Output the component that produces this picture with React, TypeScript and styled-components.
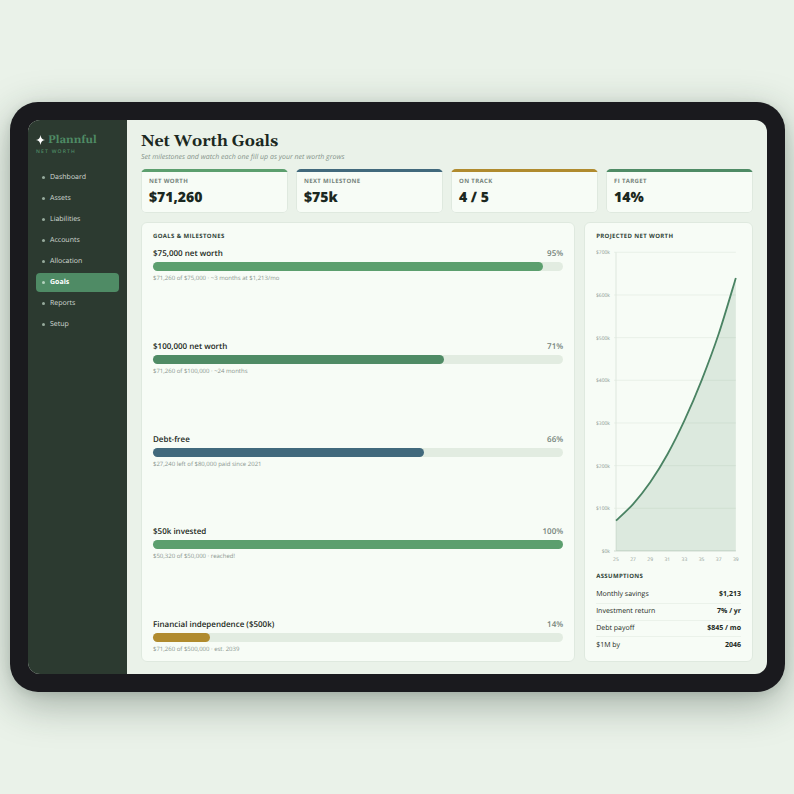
import React from "react";
import styled, { createGlobalStyle } from "styled-components";

const SANS = '"Open Sans", "Noto Sans", sans-serif';
const SERIF = 'Gelasio, Georgia, serif';

const GlobalStyle = createGlobalStyle`
  *, *::before, *::after { box-sizing: border-box; }
  body {
    margin: 0;
    background: #eaf2e9;
    color: #1b2821;
    font-family: ${SANS};
    text-rendering: geometricPrecision;
  }
  h1, h2, h3, p, ul, ol { margin: 0; padding: 0; }
  ul, ol { list-style: none; }
`;

const Stage = styled.div`
  min-height: 100vh;
  display: flex;
  align-items: center;
  justify-content: center;
  padding: 0 9px 0 10px;
  overflow: hidden;
`;

const Device = styled.div`
  width: 100%;
  padding: 18px;
  border-radius: 28px;
  background: #1a1a1e;
  box-shadow: 0 12px 40px rgba(30, 50, 38, 0.36), 0 2px 10px rgba(30, 50, 38, 0.1);
`;

const Screen = styled.div`
  display: flex;
  aspect-ratio: 4 / 3;
  border-radius: 12px;
  overflow: hidden;
  background: #eaf2e9;
`;

const Sidebar = styled.aside`
  flex: none;
  width: 99px;
  padding: 12px 8px;
  background: #2c3a30;
`;

const Brand = styled.div`
  display: flex;
  align-items: center;
  gap: 3px;
  color: #4f8b65;
  font: 700 11px/16px ${SERIF};
`;

const BrandStar = styled.svg`
  width: 9px;
  height: 10px;
  fill: #ffffff;
`;

const BrandSub = styled.p`
  color: #4f8b65;
  font-size: 5px;
  font-weight: 600;
  line-height: 9px;
  letter-spacing: 0.24em;
`;

const NavList = styled.ul`
  display: flex;
  flex-direction: column;
  gap: 2px;
  margin-top: 11px;
`;

const NavLink = styled.a<{ $active?: boolean }>`
  display: flex;
  align-items: center;
  gap: 5px;
  height: 19px;
  padding: 0 6px;
  border-radius: 4px;
  background: ${(p) => (p.$active ? "#4f8b65" : "transparent")};
  color: ${(p) => (p.$active ? "#ffffff" : "#d3dbd5")};
  font-size: 7px;
  font-weight: ${(p) => (p.$active ? 700 : 400)};
  line-height: 13px;
  text-decoration: none;

  &::before {
    content: "";
    width: 3px;
    height: 3px;
    border-radius: 50%;
    background: ${(p) => (p.$active ? "#b4d2be" : "#96aa9c")};
  }
`;

const Main = styled.main`
  flex: 1;
  min-width: 0;
  display: flex;
  flex-direction: column;
  padding: 12px 14px 12px;
`;

const Title = styled.h1`
  font: 700 16px/20px ${SERIF};
`;

const Subtitle = styled.p`
  color: #85928a;
  font-size: 7px;
  font-style: italic;
  line-height: 11px;
`;

const Stats = styled.section`
  display: grid;
  grid-template-columns: repeat(4, 1fr);
  gap: 8px;
  margin: 6px 0 9px;
`;

const StatCard = styled.article<{ $color: string }>`
  height: 44px;
  padding-bottom: 6px;
  border-radius: 5px;
  overflow: hidden;
  background: #f7fcf6;
  box-shadow: inset 0 0 0 1px #dfe9df;

  &::before {
    content: "";
    display: block;
    height: 3px;
    margin-bottom: 6px;
    background: ${(p) => p.$color};
  }
`;

const StatLabel = styled.h2`
  margin: 0 8px;
  color: #75837b;
  font-size: 6px;
  font-weight: 700;
  line-height: 7px;
  letter-spacing: 0.06em;
`;

const StatValue = styled.p`
  margin: 3px 8px 0;
  font-size: 14px;
  font-weight: 800;
  line-height: 20px;
`;

const Panels = styled.div`
  flex: 1;
  min-height: 0;
  display: grid;
  grid-template-columns: 72fr 28fr;
  gap: 9px;
`;

const Panel = styled.section`
  min-width: 0;
  min-height: 0;
  display: flex;
  flex-direction: column;
  padding: 8px 11px;
  border: 1px solid #dfe9df;
  border-radius: 6px;
  background: #f7fcf6;
`;

const PanelTitle = styled.h2`
  color: #304438;
  font-size: 6px;
  font-weight: 700;
  line-height: 10px;
  letter-spacing: 0.06em;
`;

const GoalList = styled.ul`
  flex: 1;
  display: flex;
  flex-direction: column;
  justify-content: space-between;
  margin-top: 7px;
`;

const GoalHead = styled.div`
  display: flex;
  justify-content: space-between;
  font-size: 8px;
  line-height: 11px;
`;

const GoalName = styled.h3`
  font-size: 8px;
  font-weight: 600;
`;

const GoalPercent = styled.span`
  color: #75837b;
  font-weight: 600;
`;

const Track = styled.div`
  height: 9px;
  margin-top: 3px;
  border-radius: 5px;
  background: #e2ece1;
`;

const Fill = styled.div<{ $color: string }>`
  height: 100%;
  border-radius: 5px;
  background: ${(p) => p.$color};
`;

const GoalNote = styled.p`
  margin-top: 3px;
  color: #8a968f;
  font-size: 6px;
  line-height: 8px;
`;

const ChartSvg = styled.svg`
  flex: 1;
  width: 100%;
  min-height: 0;
  margin: 5px 0 7px;
  font-family: ${SANS};
  font-size: 5px;
`;

const Facts = styled.table`
  width: 100%;
  height: 66px;
  margin-top: 6px;
  border-collapse: collapse;
  font-size: 7px;
  line-height: 13px;

  tr + tr {
    border-top: 1px solid #ebf2ea;
  }
  th {
    padding: 0;
    font-weight: 400;
    text-align: left;
  }
  td {
    padding: 0;
    font-weight: 700;
    text-align: right;
  }
`;

const NAV = ["Dashboard", "Assets", "Liabilities", "Accounts", "Allocation", "Goals", "Reports", "Setup"];

const STATS = [
  { label: "NET WORTH", value: "$71,260", color: "#5c9f6e" },
  { label: "NEXT MILESTONE", value: "$75k", color: "#41697c" },
  { label: "ON TRACK", value: "4 / 5", color: "#b08b2e" },
  { label: "FI TARGET", value: "14%", color: "#4f8b65" },
];

const GOALS = [
  { name: "$75,000 net worth", percent: 95, note: "$71,260 of $75,000 · ~3 months at $1,213/mo", color: "#5c9f6e" },
  { name: "$100,000 net worth", percent: 71, note: "$71,260 of $100,000 · ~24 months", color: "#4f8b65" },
  { name: "Debt-free", percent: 66, note: "$27,240 left of $80,000 paid since 2021", color: "#41697c" },
  { name: "$50k invested", percent: 100, note: "$50,320 of $50,000 · reached!", color: "#5c9f6e" },
  { name: "Financial independence ($500k)", percent: 14, note: "$71,260 of $500,000 · est. 2039", color: "#b08b2e" },
];

const FACTS = [
  ["Monthly savings", "$1,213"],
  ["Investment return", "7% / yr"],
  ["Debt payoff", "$845 / mo"],
  ["$1M by", "2046"],
];

// Projected net worth in thousands, every second year.
const PROJECTION = [71, 110, 161, 226, 306, 400, 509, 640];

const PLOT = { left: 20, right: 140, top: 6, bottom: 305 };
const toX = (i: number) => PLOT.left + (i * (PLOT.right - PLOT.left)) / (PROJECTION.length - 1);
const toY = (v: number) => PLOT.bottom - (v * (PLOT.bottom - PLOT.top)) / 700;

function smoothPath(values: number[]) {
  const pts = values.map((v, i) => [toX(i), toY(v)]);
  let d = `M${pts[0][0]} ${pts[0][1]}`;
  for (let i = 0; i < pts.length - 1; i++) {
    const a = pts[Math.max(i - 1, 0)];
    const b = pts[i];
    const c = pts[i + 1];
    const e = pts[Math.min(i + 2, pts.length - 1)];
    d += ` C${b[0] + (c[0] - a[0]) / 6} ${b[1] + (c[1] - a[1]) / 6} ${c[0] - (e[0] - b[0]) / 6} ${c[1] - (e[1] - b[1]) / 6} ${c[0]} ${c[1]}`;
  }
  return d;
}

function ProjectionChart() {
  const line = smoothPath(PROJECTION);
  return (
    <ChartSvg viewBox="0 0 145 318" role="img" aria-label="Projected net worth from 2025 to 2039">
      {[0, 100, 200, 300, 400, 500, 600, 700].map((v) => (
        <g key={v}>
          <line x1={PLOT.left - 2} x2={PLOT.right} y1={toY(v)} y2={toY(v)} stroke={v ? "#e9f0e8" : "#ccd8cd"} />
          <text x={14} y={toY(v) + 2} textAnchor="end" fill="#8a968f">{`$${v}k`}</text>
        </g>
      ))}
      <line x1={PLOT.left} x2={PLOT.left} y1={PLOT.top} y2={PLOT.bottom} stroke="#dfe7de" />
      <path d={`${line} L${PLOT.right} ${PLOT.bottom} L${PLOT.left} ${PLOT.bottom} Z`} fill="#4f8b65" fillOpacity="0.16" />
      <path d={line} fill="none" stroke="#4a8363" strokeWidth="1.8" strokeLinejoin="round" />
      {PROJECTION.map((_, i) => (
        <text key={i} x={toX(i)} y={315} textAnchor="middle" fill="#8a968f">
          {25 + i * 2}
        </text>
      ))}
    </ChartSvg>
  );
}

export default function App() {
  return (
    <>
      <GlobalStyle />
      <Stage>
        <Device>
          <Screen>
            <Sidebar>
              <Brand>
                <BrandStar viewBox="0 0 18 20" aria-hidden="true">
                  <path d="M9 0 C10 6 12 9 18 10 C12 11 10 14 9 20 C8 14 6 11 0 10 C6 9 8 6 9 0 Z" />
                </BrandStar>
                Plannful
              </Brand>
              <BrandSub>NET WORTH</BrandSub>
              <nav aria-label="Main">
                <NavList>
                  {NAV.map((name) => (
                    <li key={name}>
                      <NavLink
                        href={`#${name.toLowerCase()}`}
                        $active={name === "Goals"}
                        aria-current={name === "Goals" ? "page" : undefined}
                      >
                        {name}
                      </NavLink>
                    </li>
                  ))}
                </NavList>
              </nav>
            </Sidebar>
            <Main>
              <header>
                <Title>Net Worth Goals</Title>
                <Subtitle>Set milestones and watch each one fill up as your net worth grows</Subtitle>
              </header>
              <Stats>
                {STATS.map((s) => (
                  <StatCard key={s.label} $color={s.color}>
                    <StatLabel>{s.label}</StatLabel>
                    <StatValue>{s.value}</StatValue>
                  </StatCard>
                ))}
              </Stats>
              <Panels>
                <Panel>
                  <PanelTitle>GOALS &amp; MILESTONES</PanelTitle>
                  <GoalList>
                    {GOALS.map((g) => (
                      <li key={g.name}>
                        <GoalHead>
                          <GoalName>{g.name}</GoalName>
                          <GoalPercent>{g.percent}%</GoalPercent>
                        </GoalHead>
                        <Track
                          role="progressbar"
                          aria-label={g.name}
                          aria-valuenow={g.percent}
                          aria-valuemin={0}
                          aria-valuemax={100}
                        >
                          <Fill $color={g.color} style={{ width: `${g.percent}%` }} />
                        </Track>
                        <GoalNote>{g.note}</GoalNote>
                      </li>
                    ))}
                  </GoalList>
                </Panel>
                <Panel>
                  <PanelTitle>PROJECTED NET WORTH</PanelTitle>
                  <ProjectionChart />
                  <PanelTitle>ASSUMPTIONS</PanelTitle>
                  <Facts>
                    <tbody>
                      {FACTS.map(([label, value]) => (
                        <tr key={label}>
                          <th scope="row">{label}</th>
                          <td>{value}</td>
                        </tr>
                      ))}
                    </tbody>
                  </Facts>
                </Panel>
              </Panels>
            </Main>
          </Screen>
        </Device>
      </Stage>
    </>
  );
}
